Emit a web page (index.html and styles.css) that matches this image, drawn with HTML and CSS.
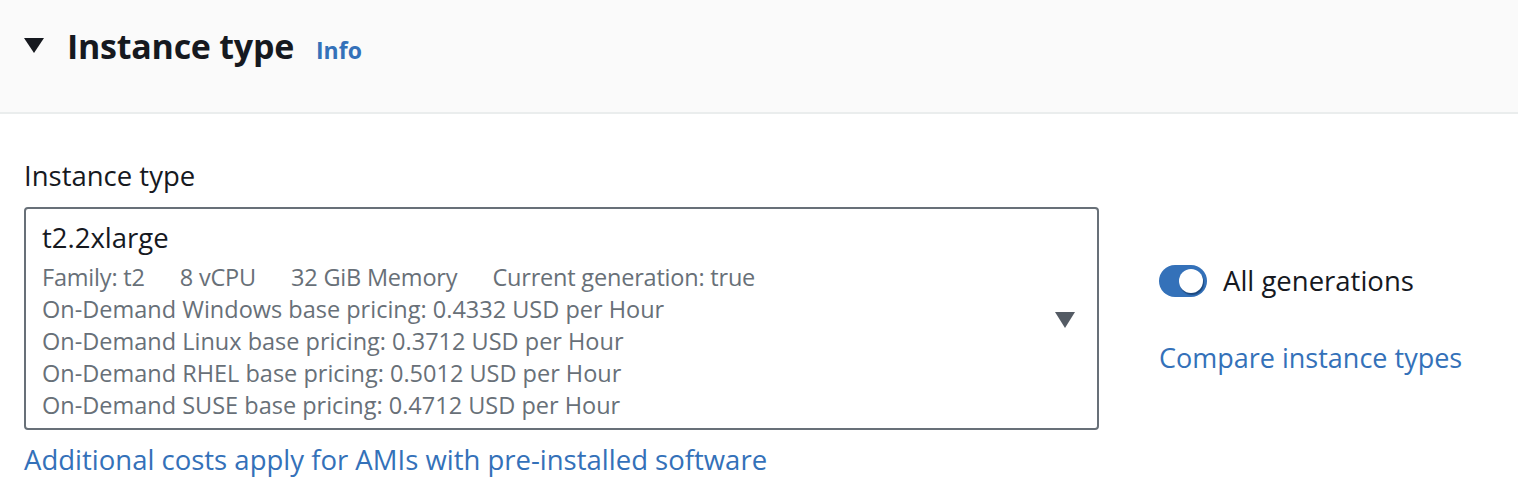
FILE: index.html
```html
<!DOCTYPE html>
<html lang="en">
<head>
  <meta charset="UTF-8">
  <title>Instance type</title>
  <link rel="stylesheet" href="styles.css">
</head>
<body>

  <div class="panel-header">
    <svg class="expand-icon" width="20" height="15" viewBox="0 0 20 15">
      <polygon points="0,0 20,0 10,15" fill="#16191f"/>
    </svg>
    <div class="header-title">
      <h2>Instance type</h2>
      <a class="info-link" href="#">Info</a>
    </div>
  </div>

  <div class="panel-body">
    <div class="field">
      <label class="field-label">Instance type</label>
      <div class="select-box">
        <div class="select-text">
          <div class="select-value">t2.2xlarge</div>
          <div class="select-tags">
            <span>Family: t2</span>
            <span>8 vCPU</span>
            <span>32 GiB Memory</span>
            <span>Current generation: true</span>
          </div>
          <div class="select-desc">On-Demand Windows base pricing: 0.4332 USD per Hour</div>
          <div class="select-desc">On-Demand Linux base pricing: 0.3712 USD per Hour</div>
          <div class="select-desc">On-Demand RHEL base pricing: 0.5012 USD per Hour</div>
          <div class="select-desc">On-Demand SUSE base pricing: 0.4712 USD per Hour</div>
        </div>
        <svg class="caret" width="20" height="16" viewBox="0 0 20 16">
          <polygon points="0,0 20,0 10,16" fill="#545b64"/>
        </svg>
      </div>
      <a class="link extra-cost" href="#">Additional costs apply for AMIs with pre-installed software</a>
    </div>

    <div class="side">
      <div class="toggle-row">
        <span class="toggle"><span class="knob"></span></span>
        <span>All generations</span>
      </div>
      <a class="link compare" href="#">Compare instance types</a>
    </div>
  </div>

</body>
</html>
```
FILE: styles.css
```css
body { margin: 0; font-family: "Open Sans", Arial, sans-serif; color: #16191f; background: #fff; }
a { text-decoration: none; }

.panel-header { height: 114px; box-sizing: border-box; padding: 24px 24px 0; background: #fafafa; border-bottom: 2px solid #eaeded; display: flex; align-items: flex-start; }
.expand-icon { margin-top: 14px; flex-shrink: 0; }
.header-title { display: flex; align-items: baseline; margin-left: 23px; }
.header-title h2 { margin: 0; font-size: 34px; line-height: 44px; font-weight: 700; letter-spacing: -0.25px; }
.info-link { margin-left: 22px; font-size: 23px; font-weight: 700; color: #3471b9; }

.panel-body { display: flex; padding: 42px 24px 0; }
.field { width: 1075px; }
.field-label { display: block; font-size: 27.5px; line-height: 40px; margin-bottom: 11px; }

.select-box { display: flex; align-items: center; border: 2px solid #687078; border-radius: 4px; padding: 9px 22px 7px 16px; }
.select-text { flex: 1; }
.select-value { font-size: 27.5px; line-height: 40px; margin-bottom: 3px; }
.select-tags, .select-desc { font-size: 23.5px; line-height: 32px; color: #687078; }
.select-tags span { margin-right: 29px; letter-spacing: -0.2px; }
.caret { flex-shrink: 0; }

.link { color: #3471b9; font-size: 27.5px; line-height: 40px; }
.extra-cost { display: inline-block; margin-top: 10px; }

.side { margin-left: 60px; padding-top: 109px; display: flex; flex-direction: column; align-items: flex-start; }
.toggle-row { display: flex; align-items: center; height: 32px; font-size: 27.5px; line-height: 32px; }
.toggle { width: 48px; height: 32px; border-radius: 16px; background: #3471b9; position: relative; margin-right: 16px; }
.knob { position: absolute; top: 4px; right: 4px; width: 24px; height: 24px; border-radius: 50%; background: #fff; box-shadow: 1px 2px 1px rgba(10, 40, 80, 0.55); }
.compare { display: block; margin-top: 41px; font-size: 27px; }
```
